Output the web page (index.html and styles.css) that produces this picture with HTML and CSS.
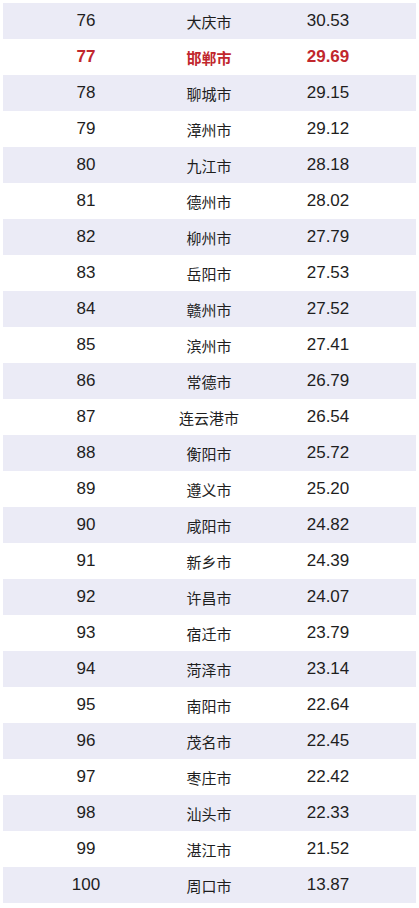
FILE: index.html
```html
<!DOCTYPE html>
<html lang="zh">
<head>
<meta charset="utf-8">
<link rel="stylesheet" href="styles.css">
</head>
<body>
<div class="table">
  <div class="row shade"><span class="rank">76</span><span class="city">大庆市</span><span class="val">30.53</span></div>
  <div class="row hl"><span class="rank">77</span><span class="city">邯郸市</span><span class="val">29.69</span></div>
  <div class="row shade"><span class="rank">78</span><span class="city">聊城市</span><span class="val">29.15</span></div>
  <div class="row"><span class="rank">79</span><span class="city">漳州市</span><span class="val">29.12</span></div>
  <div class="row shade"><span class="rank">80</span><span class="city">九江市</span><span class="val">28.18</span></div>
  <div class="row"><span class="rank">81</span><span class="city">德州市</span><span class="val">28.02</span></div>
  <div class="row shade"><span class="rank">82</span><span class="city">柳州市</span><span class="val">27.79</span></div>
  <div class="row"><span class="rank">83</span><span class="city">岳阳市</span><span class="val">27.53</span></div>
  <div class="row shade"><span class="rank">84</span><span class="city">赣州市</span><span class="val">27.52</span></div>
  <div class="row"><span class="rank">85</span><span class="city">滨州市</span><span class="val">27.41</span></div>
  <div class="row shade"><span class="rank">86</span><span class="city">常德市</span><span class="val">26.79</span></div>
  <div class="row"><span class="rank">87</span><span class="city">连云港市</span><span class="val">26.54</span></div>
  <div class="row shade"><span class="rank">88</span><span class="city">衡阳市</span><span class="val">25.72</span></div>
  <div class="row"><span class="rank">89</span><span class="city">遵义市</span><span class="val">25.20</span></div>
  <div class="row shade"><span class="rank">90</span><span class="city">咸阳市</span><span class="val">24.82</span></div>
  <div class="row"><span class="rank">91</span><span class="city">新乡市</span><span class="val">24.39</span></div>
  <div class="row shade"><span class="rank">92</span><span class="city">许昌市</span><span class="val">24.07</span></div>
  <div class="row"><span class="rank">93</span><span class="city">宿迁市</span><span class="val">23.79</span></div>
  <div class="row shade"><span class="rank">94</span><span class="city">菏泽市</span><span class="val">23.14</span></div>
  <div class="row"><span class="rank">95</span><span class="city">南阳市</span><span class="val">22.64</span></div>
  <div class="row shade"><span class="rank">96</span><span class="city">茂名市</span><span class="val">22.45</span></div>
  <div class="row"><span class="rank">97</span><span class="city">枣庄市</span><span class="val">22.42</span></div>
  <div class="row shade"><span class="rank">98</span><span class="city">汕头市</span><span class="val">22.33</span></div>
  <div class="row"><span class="rank">99</span><span class="city">湛江市</span><span class="val">21.52</span></div>
  <div class="row shade"><span class="rank">100</span><span class="city">周口市</span><span class="val">13.87</span></div>
</div>
</body>
</html>
```
FILE: styles.css
```css
html, body {
  margin: 0;
  padding: 0;
  background: #ffffff;
}
body {
  padding: 3px 3px 0 3px;
}
.table {
  width: 413px;
  display: flex;
  flex-direction: column;
}
.row {
  display: grid;
  grid-template-columns: 166px 80px 158px 1fr;
  height: 36px;
  align-items: center;
  color: #1e1e1e;
}
.row.shade {
  background: #ebebf6;
}
.rank, .val {
  text-align: center;
  font-family: "Liberation Sans", Arial, sans-serif;
  font-size: 17px;
}
.city {
  text-align: center;
  white-space: nowrap;
  font-family: "Noto Sans CJK SC", "Noto Sans", sans-serif;
  font-size: 15px;
}
.row.hl {
  color: #c1272d;
}
.row.hl .city,
.row.hl .rank,
.row.hl .val {
  font-weight: bold;
}
```
